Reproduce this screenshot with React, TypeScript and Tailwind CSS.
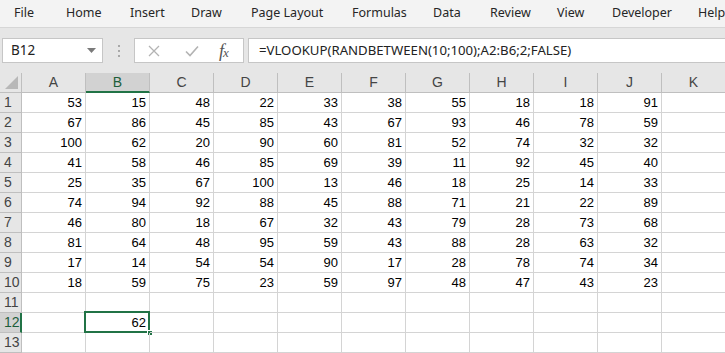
import React from "react";

const data: number[][] = [
  [53, 15, 48, 22, 33, 38, 55, 18, 18, 91],
  [67, 86, 45, 85, 43, 67, 93, 46, 78, 59],
  [100, 62, 20, 90, 60, 81, 52, 74, 32, 32],
  [41, 58, 46, 85, 69, 39, 11, 92, 45, 40],
  [25, 35, 67, 100, 13, 46, 18, 25, 14, 33],
  [74, 94, 92, 88, 45, 88, 71, 21, 22, 89],
  [46, 80, 18, 67, 32, 43, 79, 28, 73, 68],
  [81, 64, 48, 95, 59, 43, 88, 28, 63, 32],
  [17, 14, 54, 54, 90, 17, 28, 78, 74, 34],
  [18, 59, 75, 23, 59, 97, 48, 47, 43, 23],
];

const cols = ["A", "B", "C", "D", "E", "F", "G", "H", "I", "J", "K"];
const menu: { label: string; w: string }[] = [
  { label: "File", w: "w-[52px]" },
  { label: "Home", w: "w-[64px]" },
  { label: "Insert", w: "w-[61px]" },
  { label: "Draw", w: "w-[60px]" },
  { label: "Page Layout", w: "w-[101px]" },
  { label: "Formulas", w: "w-[81px]" },
  { label: "Data", w: "w-[57px]" },
  { label: "Review", w: "w-[67px]" },
  { label: "View", w: "w-[55px]" },
  { label: "Developer", w: "w-[86px]" },
  { label: "Help", w: "w-[40px]" },
];

export default function App() {
  const rows: (number | null)[][] = [];
  for (let r = 0; r < 13; r++) {
    const row: (number | null)[] = [];
    for (let c = 0; c < 11; c++) {
      if (r < 10 && c < 10) row.push(data[r][c]);
      else if (r === 11 && c === 1) row.push(62);
      else row.push(null);
    }
    rows.push(row);
  }

  return (
    <div className="w-[725px] h-[353px] overflow-hidden bg-white" style={{ fontFamily: "'Liberation Sans', Arial, sans-serif" }}>
      {/* Menu bar */}
      <div className="h-[28px] bg-[#f3f3f3] border-b border-[#d6d6d6] flex items-center pl-[14px] text-[12.5px] text-[#262626] whitespace-nowrap overflow-hidden" style={{ fontFamily: "'Noto Sans', 'Open Sans', sans-serif" }}>
        {menu.map((m) => (
          <span key={m.label} className={"shrink-0 " + m.w}>{m.label}</span>
        ))}
      </div>
      {/* Formula bar */}
      <div className="h-[45px] bg-[#e6e6e6] flex pt-[10px] pl-[2px]">
        <div className="w-[101px] h-[25px] bg-white border border-[#c6c6c6] flex items-center pl-[8px] pr-[6px] justify-between">
          <span className="text-[13.5px] text-[#222]" style={{ fontFamily: "'Noto Sans', sans-serif" }}>B12</span>
          <svg width="9" height="5" viewBox="0 0 9 5"><polygon points="0,0 9,0 4.5,5" fill="#7a7a7a" /></svg>
        </div>
        <div className="w-[31px] h-[25px] flex flex-col items-center justify-center gap-[3px]">
          <div className="w-[2px] h-[2px] bg-[#a8a8a8]" />
          <div className="w-[2px] h-[2px] bg-[#a8a8a8]" />
          <div className="w-[2px] h-[2px] bg-[#a8a8a8]" />
        </div>
        <div className="w-[110px] h-[25px] bg-white border border-[#c6c6c6] flex items-center">
          <svg className="ml-[13px]" width="12" height="12" viewBox="0 0 12 12"><path d="M1 1 L11 11 M11 1 L1 11" stroke="#b3b3b3" strokeWidth="1.3" /></svg>
          <svg className="ml-[25px]" width="14" height="12" viewBox="0 0 14 12"><path d="M1 6.5 L5 10.5 L13 1.5" stroke="#b3b3b3" strokeWidth="1.6" fill="none" /></svg>
          <span className="ml-[20px] text-[18px] leading-none italic text-[#555] tracking-[-1px]" style={{ fontFamily: "'Liberation Serif', serif" }}>f<span className="text-[13px]">x</span></span>
        </div>
        <div className="ml-[4px] flex-1 h-[25px] bg-white border border-[#c6c6c6] border-r-0 flex items-center pl-[10px] text-[13.2px] text-[#222] whitespace-nowrap" style={{ fontFamily: "'Noto Sans', sans-serif" }}>
          =VLOOKUP(RANDBETWEEN(10;100);A2:B6;2;FALSE)
        </div>
      </div>
      {/* Grid */}
      <div className="grid grid-cols-[22px_repeat(11,64px)] auto-rows-[20px] text-[13px]">
        <div className="bg-[#e6e6e6] border-r border-b border-[#bfbfbf] relative">
          <svg className="absolute right-[3px] bottom-[3px]" width="13" height="13" viewBox="0 0 13 13"><polygon points="13,0 13,13 0,13" fill="#b8b8b8" /></svg>
        </div>
        {cols.map((c) => (
          <div
            key={c}
            className={
              c === "B"
                ? "bg-[#d2d2d2] border-r border-[#bfbfbf] border-b-2 border-b-[#217346] flex items-center justify-center text-[#1d5e3a] text-[14px]"
                : "bg-[#e6e6e6] border-r border-b border-[#bfbfbf] flex items-center justify-center text-[#444] text-[14px]"
            }
          >
            {c}
          </div>
        ))}
        {rows.map((row, r) => (
          <React.Fragment key={r}>
            <div
              className={
                r === 11
                  ? "bg-[#d2d2d2] border-b border-[#bfbfbf] border-r-2 border-r-[#217346] flex items-center pl-[4px] text-[#1d5e3a] text-[14px]"
                  : "bg-[#e6e6e6] border-r border-b border-[#bfbfbf] flex items-center pl-[4px] text-[#444] text-[14px]"
              }
            >
              {r + 1}
            </div>
            {row.map((v, c) => (
              <div key={c} className="border-r border-b border-[#d4d4d4] flex items-center justify-end pr-[3px] text-black relative">
                {v}
                {r === 11 && c === 1 && (
                  <>
                    <div className="absolute left-[-2px] top-[-2px] w-[66px] h-[22px] border-2 border-[#217346]" />
                    <div className="absolute right-[-4px] bottom-[-4px] w-[6px] h-[6px] bg-[#217346] border border-white" />
                  </>
                )}
              </div>
            ))}
          </React.Fragment>
        ))}
      </div>
    </div>
  );
}
